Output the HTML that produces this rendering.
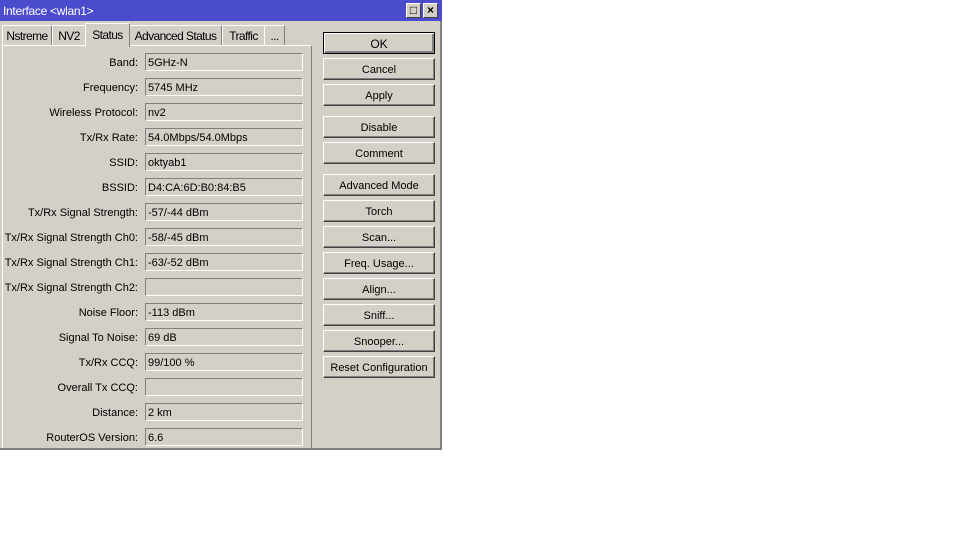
<!DOCTYPE html><html><head><style>
body{margin:0;width:960px;height:540px;background:#fff;position:relative;overflow:hidden;font-family:"Liberation Sans",sans-serif;font-size:11px;color:#000}
.win{position:absolute;left:0;top:0;width:440px;height:448px;background:#d4d0c8;border-right:2px solid #808080;border-bottom:2px solid #808080}
.title{position:absolute;left:0;top:0;width:442px;height:21px;background:#4b4bcd;color:#fff;line-height:23px;text-indent:3px;font-size:12px;letter-spacing:-0.3px}
.tb{position:absolute;top:3px;width:13px;height:13px;background:#d4d0c8;border:1px solid #fff;border-right-color:#404040;border-bottom-color:#404040;font-size:12px;line-height:13px;text-align:center;color:#000;font-weight:bold}
.tab{position:absolute;top:25px;height:20px;line-height:21px;text-align:center;border:1px solid #fff;border-right-color:#808080;border-bottom:none;background:#d4d0c8;font-size:12px;letter-spacing:-0.6px}
.panel{position:absolute;left:2px;top:45px;width:308px;height:402px;border:1px solid #fff;border-right-color:#808080;border-bottom:none}
.row{position:absolute;left:0;height:18px;width:960px}
.row span{position:absolute;right:822px;white-space:nowrap;line-height:20px}
.f{position:absolute;left:145px;width:156px;height:16px;border:1px solid #808080;border-right-color:#fff;border-bottom-color:#fff;line-height:18px;text-indent:2px}
.btn{position:absolute;left:323px;width:110px;height:20px;border:1px solid #fff;border-right-color:#404040;border-bottom-color:#404040;text-align:center;line-height:22px;box-shadow:inset -1px -1px #808080}
</style></head><body>
<div class="win"></div>
<div class="title">Interface &lt;wlan1&gt;</div>
<div class="tb" style="left:406px">□</div><div class="tb" style="left:423px">×</div>
<div class="tab" style="left:2px;width:48px">Nstreme</div>
<div class="tab" style="left:52px;width:32px">NV2</div>
<div class="tab" style="left:85px;width:43px;top:23px;height:23px;line-height:22px;z-index:2">Status</div>
<div class="tab" style="left:129px;width:91px">Advanced Status</div>
<div class="tab" style="left:222px;width:41px">Traffic</div>
<div class="tab" style="left:264px;width:19px">...</div>
<div class="panel"></div>
<div class="row" style="top:53px"><span>Band:</span><div class="f">5GHz-N</div></div>
<div class="row" style="top:78px"><span>Frequency:</span><div class="f">5745 MHz</div></div>
<div class="row" style="top:103px"><span>Wireless Protocol:</span><div class="f">nv2</div></div>
<div class="row" style="top:128px"><span>Tx/Rx Rate:</span><div class="f">54.0Mbps/54.0Mbps</div></div>
<div class="row" style="top:153px"><span>SSID:</span><div class="f">oktyab1</div></div>
<div class="row" style="top:178px"><span>BSSID:</span><div class="f">D4:CA:6D:B0:84:B5</div></div>
<div class="row" style="top:203px"><span>Tx/Rx Signal Strength:</span><div class="f">-57/-44 dBm</div></div>
<div class="row" style="top:228px"><span>Tx/Rx Signal Strength Ch0:</span><div class="f">-58/-45 dBm</div></div>
<div class="row" style="top:253px"><span>Tx/Rx Signal Strength Ch1:</span><div class="f">-63/-52 dBm</div></div>
<div class="row" style="top:278px"><span>Tx/Rx Signal Strength Ch2:</span><div class="f"></div></div>
<div class="row" style="top:303px"><span>Noise Floor:</span><div class="f">-113 dBm</div></div>
<div class="row" style="top:328px"><span>Signal To Noise:</span><div class="f">69 dB</div></div>
<div class="row" style="top:353px"><span>Tx/Rx CCQ:</span><div class="f">99/100 %</div></div>
<div class="row" style="top:378px"><span>Overall Tx CCQ:</span><div class="f"></div></div>
<div class="row" style="top:403px"><span>Distance:</span><div class="f">2 km</div></div>
<div class="row" style="top:428px"><span>RouterOS Version:</span><div class="f">6.6</div></div>
<div class="btn" style="top:32px;border:1px solid #000;box-shadow:inset 1px 1px #fff,inset -2px -2px #808080;font-size:12px">OK</div>
<div class="btn" style="top:58px">Cancel</div>
<div class="btn" style="top:84px">Apply</div>
<div class="btn" style="top:116px">Disable</div>
<div class="btn" style="top:142px">Comment</div>
<div class="btn" style="top:174px">Advanced Mode</div>
<div class="btn" style="top:200px">Torch</div>
<div class="btn" style="top:226px">Scan...</div>
<div class="btn" style="top:252px">Freq. Usage...</div>
<div class="btn" style="top:278px">Align...</div>
<div class="btn" style="top:304px">Sniff...</div>
<div class="btn" style="top:330px">Snooper...</div>
<div class="btn" style="top:356px">Reset Configuration</div>
</body></html>
